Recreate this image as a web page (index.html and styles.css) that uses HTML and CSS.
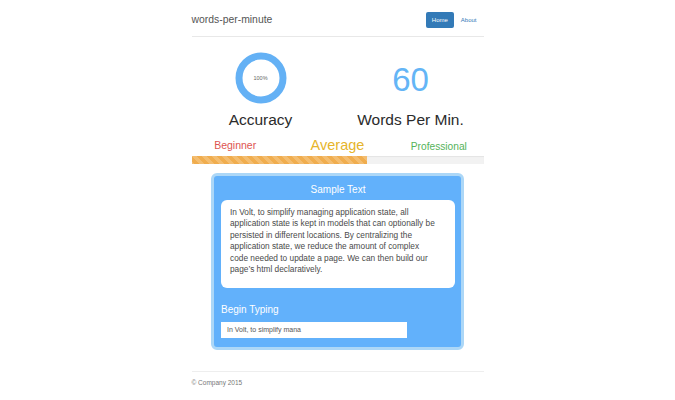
FILE: index.html
```html
<!DOCTYPE html>
<html>
<head>
<meta charset="utf-8">
<title>words-per-minute</title>
<link rel="stylesheet" href="styles.css">
</head>
<body>
<div class="container">
  <header class="header">
    <div class="brand">words-per-minute</div>
    <nav class="nav">
      <a class="nav-link active">Home</a>
      <a class="nav-link">About</a>
    </nav>
  </header>

  <section class="stats">
    <div class="stat">
      <div class="stat-top">
        <svg class="ring" width="52" height="52" viewBox="0 0 52 52">
          <circle cx="26" cy="26" r="22" fill="none" stroke="#64b1f5" stroke-width="7"/>
        </svg>
        <span class="ring-label">100%</span>
      </div>
      <div class="stat-label">Accuracy</div>
    </div>
    <div class="stat">
      <div class="stat-top"><span class="wpm">60</span></div>
      <div class="stat-label">Words Per Min.</div>
    </div>
  </section>

  <section class="levels">
    <div class="level beginner">Beginner</div>
    <div class="level average">Average</div>
    <div class="level professional">Professional</div>
  </section>
  <div class="progress"><div class="progress-bar" style="width:60%"></div></div>

  <section class="panel">
    <h2 class="panel-title">Sample Text</h2>
    <div class="sample">In Volt, to simplify managing application state, all<br>application state is kept in models that can optionally be<br>persisted in different locations. By centralizing the<br>application state, we reduce the amount of complex<br>code needed to update a page. We can then build our<br>page’s html declaratively.</div>
    <h3 class="typing-title">Begin Typing</h3>
    <div class="typing-input">In Volt, to simplify mana</div>
  </section>

  <footer class="footer">© Company 2015</footer>
</div>
</body>
</html>
```

FILE: styles.css
```css
*, *::before, *::after {
  box-sizing: border-box;
}
html, body {
  margin: 0;
  padding: 0;
  background: #fff;
}
body {
  font-family: "Liberation Sans", Arial, sans-serif;
  color: #333;
}
.container {
  width: 292px;
  margin: 0 auto;
}
.header {
  display: flex;
  justify-content: space-between;
  align-items: flex-start;
  padding-top: 12px;
  height: 37px;
  border-bottom: 1px solid #e8e8e8;
}
.brand {
  font-size: 10.4px;
  line-height: 16px;
  color: #555;
}
.nav {
  display: flex;
  gap: 7px;
  margin-right: 7px;
}
.nav-link {
  font-size: 6px;
  line-height: 16px;
  color: #337ab7;
}
.nav-link.active {
  background: #337ab7;
  color: #fff;
  border-radius: 2px;
  padding: 0 6px;
  height: 16px;
}
.stats {
  display: grid;
  grid-template-columns: 1fr 1fr;
  margin-top: 15px;
}
.stat {
  display: flex;
  flex-direction: column;
  align-items: center;
}
.stat:first-child {
  padding-right: 8px;
}
.stat-top {
  position: relative;
  height: 52px;
  display: flex;
  align-items: center;
  justify-content: center;
}
.ring {
  display: block;
}
.ring-label {
  position: absolute;
  left: 0;
  right: 0;
  top: 0;
  bottom: 0;
  display: flex;
  align-items: center;
  justify-content: center;
  font-size: 5.5px;
  color: #666;
}
.wpm {
  font-size: 33px;
  line-height: 52px;
  margin-top: 4px;
  color: #64b5f6;
}
.stat-label {
  font-size: 15.5px;
  line-height: 18px;
  margin-top: 7px;
  color: #2b2b2b;
}
.levels {
  display: grid;
  grid-template-columns: 1fr 1fr 1fr;
  align-items: center;
  margin-top: 7px;
  height: 18px;
}
.level {
  text-align: center;
}
.beginner {
  font-size: 10.5px;
  color: #dd5450;
  padding-right: 10px;
}
.average {
  font-size: 14.5px;
  color: #e6b52c;
  line-height: 18px;
}
.professional {
  font-size: 10.2px;
  color: #55b35a;
  padding-left: 8px;
  padding-top: 2px;
}
.progress {
  height: 8px;
  margin-top: 2px;
  background: #f2f2f2;
  box-shadow: inset 0 1px 1px rgba(0,0,0,0.06);
}
.progress-bar {
  height: 100%;
  background-color: #f0ad4e;
  background-image: linear-gradient(45deg, rgba(255,255,255,.2) 25%, transparent 25%, transparent 50%, rgba(255,255,255,.2) 50%, rgba(255,255,255,.2) 75%, transparent 75%, transparent);
  background-size: 10px 10px;
}
.panel {
  width: 253px;
  margin: 9px auto 0;
  background: #62b1fb;
  border: 3px solid #acd7f7;
  border-radius: 6px;
  padding: 7px 6px 9px 7px;
}
.panel-title {
  margin: 0 0 3px;
  font-size: 10px;
  line-height: 14px;
  font-weight: normal;
  text-align: center;
  color: #fff;
}
.sample {
  background: #fff;
  border-radius: 6px;
  padding: 7px 6px 13px 9px;
  font-size: 8.3px;
  line-height: 11.4px;
  color: #4a4a4a;
  white-space: nowrap;
}
.typing-title {
  margin: 15px 0 5px;
  font-size: 10px;
  line-height: 14px;
  font-weight: normal;
  color: #fff;
}
.typing-input {
  width: 186px;
  height: 16px;
  background: #fff;
  padding: 0 6px;
  font-size: 7px;
  line-height: 16px;
  color: #555;
}
.footer {
  margin-top: 21px;
  border-top: 1px solid #eee;
  padding-top: 6px;
  font-size: 6.5px;
  line-height: 10px;
  color: #777;
}
```
